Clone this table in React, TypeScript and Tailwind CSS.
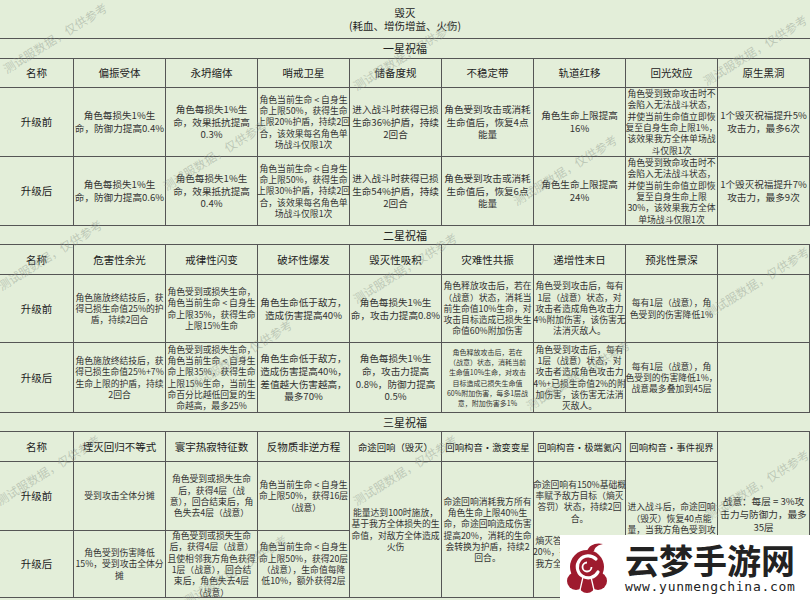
import React from 'react';

type Size = 'n' | 's' | 'xs' | 'h' | 'hs';

const sizeClass: Record<Size, string> = {
  n: 'text-[9.6px] leading-[12.7px] text-[#333]',
  s: 'text-[8.8px] leading-[11.3px] text-[#333]',
  xs: 'text-[7px] leading-[10.3px] text-[#333]',
  h: 'text-[10.5px] leading-[14px] text-[#222]',
  hs: 'text-[9.4px] leading-[14px] text-[#222]',
};

type C = { t: string; s?: Size };

const Cell: React.FC<{ text?: string; size?: Size; span?: string }> = ({ text = '', size = 'n', span = '' }) => (
  <div className={`flex items-center justify-center border-r border-b border-[#555] text-center ${span}`}>
    <p className={`whitespace-pre ${sizeClass[size]}`}>{text}</p>
  </div>
);

const SectionLabel: React.FC<{ text: string }> = ({ text }) => (
  <div className="col-span-9 flex items-center justify-center border-b border-[#555] text-[11px] text-[#222]">
    {text}
  </div>
);

const one = {
  head: ['名称', '偏振受体', '永坍缩体', '哨戒卫星', '储备度规', '不稳定带', '轨道红移', '回光效应', '原生黑洞'],
  before: [
    { t: '角色每损失1%生\n命，防御力提高0.4%' },
    { t: '角色每损失1%生\n命，效果抵抗提高\n0.3%' },
    { t: '角色当前生命 < 自身生\n命上限50%，获得生命\n上限20%护盾，持续2回\n合，该效果每名角色单\n场战斗仅限1次', s: 's' },
    { t: '进入战斗时获得已损\n生命36%护盾，持续\n2回合' },
    { t: '角色受到攻击或消耗\n生命值后，恢复4点\n能量' },
    { t: '角色生命上限提高\n16%' },
    { t: '角色受到致命攻击时不\n会陷入无法战斗状态，\n并使当前生命值立即恢\n复至自身生命上限1%，\n该效果我方全体单场战\n斗仅限1次', s: 's' },
    { t: '1个毁灭祝福提升5%\n攻击力，最多6次' },
  ] as C[],
  after: [
    { t: '角色每损失1%生\n命，防御力提高0.6%' },
    { t: '角色每损失1%生\n命，效果抵抗提高\n0.4%' },
    { t: '角色当前生命 < 自身生\n命上限50%，获得生命\n上限30%护盾，持续2回\n合，该效果每名角色单\n场战斗仅限1次', s: 's' },
    { t: '进入战斗时获得已损\n生命54%护盾，持续\n2回合' },
    { t: '角色受到攻击或消耗\n生命值后，恢复6点\n能量' },
    { t: '角色生命上限提高\n24%' },
    { t: '角色受到致命攻击时不\n会陷入无法战斗状态，\n并使当前生命值立即恢\n复至自身生命上限\n30%，该效果我方全体\n单场战斗仅限1次', s: 's' },
    { t: '1个毁灭祝福提升7%\n攻击力，最多9次' },
  ] as C[],
};

const two = {
  head: ['名称', '危害性余光', '戒律性闪变', '破坏性爆发', '毁灭性吸积', '灾难性共振', '递增性末日', '预兆性景深', ''],
  before: [
    { t: '角色施放终结技后，获\n得已损生命值25%的护\n盾，持续2回合', s: 's' },
    { t: '角色受到或损失生命，\n角色当前生命 < 自身生\n命上限35%，获得生命\n上限15%生命', s: 's' },
    { t: '角色生命低于敌方，\n造成伤害提高40%' },
    { t: '角色每损失1%生\n命，攻击力提高0.8%' },
    { t: '角色释放攻击后，若在\n（战意）状态，消耗当\n前生命值10%生命，对\n攻击目标造成已损失生\n命值60%附加伤害', s: 's' },
    { t: '角色受到攻击后，每有\n1层（战意）状态，对\n攻击者造成角色攻击力\n4%附加伤害，该伤害无\n法消灭敌人。', s: 's' },
    { t: '每有1层（战意），角\n色受到的伤害降低1%', s: 's' },
    { t: '' },
  ] as C[],
  after: [
    { t: '角色施放终结技后，获\n得已损生命值25%+7%\n生命上限的护盾，持续\n2回合', s: 's' },
    { t: '角色受到或损失生命，\n角色当前生命 < 自身生\n命上限35%，获得生命\n上限15%生命，当前生\n命百分比越低回复的生\n命越高，最多25%', s: 's' },
    { t: '角色生命低于敌方，\n造成伤害提高40%，\n差值越大伤害越高，\n最多70%' },
    { t: '角色每损失1%生\n命，攻击力提高\n0.8%，防御力提高\n0.5%' },
    { t: '角色释放攻击后，若在\n（战意）状态，消耗当前\n生命值10%生命，对攻击\n目标造成已损失生命值\n60%附加伤害，每多1层战\n意，附加伤害多1%', s: 'xs' },
    { t: '角色受到攻击后，每有\n1层（战意）状态，对\n攻击者造成角色攻击力\n4%+已损生命值2%的附\n加伤害，该伤害无法消\n灭敌人。', s: 's' },
    { t: '每有1层（战意），角\n色受到的伤害降低1%，\n战意最多叠加到45层', s: 's' },
    { t: '' },
  ] as C[],
};

const marks = [
  'left-[-7px] top-[30px]',
  'left-[343px] top-[47px]',
  'left-[693px] top-[42px]',
  'left-[153px] top-[147px]',
  'left-[503px] top-[162px]',
  'left-[-12px] top-[247px]',
  'left-[343px] top-[260px]',
  'left-[695px] top-[274px]',
  'left-[178px] top-[347px]',
  'left-[516px] top-[367px]',
  'left-[-14px] top-[462px]',
  'left-[343px] top-[462px]',
  'left-[695px] top-[477px]',
  'left-[173px] top-[562px]',
];

const Logo: React.FC = () => (
  <div className="absolute left-[560px] top-[535px] z-20 flex h-[65px] w-[250px] items-center gap-[16px] bg-white pl-[5px]">
    <svg width="44" height="52" viewBox="0 0 44 52">
      <g fill="#9e1b2e">
        <path d="M22 9 C24 3 31 0 38 2 C33 3 30 5 29 9 Z" />
        <circle cx="22" cy="25" r="17" />
        <circle cx="11" cy="39" r="9" />
        <circle cx="33" cy="39" r="9" />
        <circle cx="22" cy="43" r="8" />
      </g>
      <path d="M31 17 A11 11 0 1 0 33 30" fill="none" stroke="#fff" strokeWidth="3.2" strokeLinecap="round" />
      <path d="M22 20.5 A4.5 4.5 0 1 0 26.5 25" fill="none" stroke="#fff" strokeWidth="1.8" />
      <path d="M18 35 L15 48 M26 35 L29 48" stroke="#fff" strokeWidth="1.3" />
    </svg>
    <div className="flex flex-col">
      <span className="text-[34px] font-bold leading-[36px] text-[#222]">云梦手游网</span>
      <span className="mt-[2px] font-['DejaVu_Sans_Mono',monospace] text-[13px] leading-[14px] tracking-[0.7px] text-[#222]">
        www.yunmengchina.com
      </span>
    </div>
  </div>
);

export default function App() {
  return (
    <div className="relative h-[600px] w-[810px] overflow-hidden bg-[#e3eed9] font-['Noto_Sans_CJK_SC',sans-serif]">
      <div className="grid grid-cols-[74px_repeat(8,92px)] grid-rows-[39px_20px_29px_69px_69px_19px_30px_68px_70px_19px_30px_69px_67px]">
        <div className="col-span-9 flex flex-col items-center justify-center border-b border-[#555] text-[10.5px] leading-[13px] text-[#222]">
          <span>毁灭</span>
          <span>(耗血、增伤增益、火伤)</span>
        </div>

        <SectionLabel text="一星祝福" />
        {one.head.map((h, i) => (
          <Cell key={`h1${i}`} text={h} size="h" />
        ))}
        <Cell text="升级前" size="h" />
        {one.before.map((c, i) => (
          <Cell key={`b1${i}`} text={c.t} size={c.s} />
        ))}
        <Cell text="升级后" size="h" />
        {one.after.map((c, i) => (
          <Cell key={`a1${i}`} text={c.t} size={c.s} />
        ))}

        <SectionLabel text="二星祝福" />
        {two.head.map((h, i) => (
          <Cell key={`h2${i}`} text={h} size="h" />
        ))}
        <Cell text="升级前" size="h" />
        {two.before.map((c, i) => (
          <Cell key={`b2${i}`} text={c.t} size={c.s} />
        ))}
        <Cell text="升级后" size="h" />
        {two.after.map((c, i) => (
          <Cell key={`a2${i}`} text={c.t} size={c.s} />
        ))}

        <SectionLabel text="三星祝福" />
        <Cell text="名称" size="h" />
        <Cell text="堙灭回归不等式" size="h" />
        <Cell text="寰宇热寂特征数" size="h" />
        <Cell text="反物质非逆方程" size="h" />
        <Cell text="命途回响（毁灭）" size="hs" />
        <Cell text="回响构音·激变变星" size="hs" />
        <Cell text="回响构音·极端氦闪" size="hs" />
        <Cell text="回响构音·事件视界" size="hs" />
        <Cell text={'战意：每层 = 3%攻\n击力与防御力，最多\n35层'} span="row-span-3" />

        <Cell text="升级前" size="h" />
        <Cell text="受到攻击全体分摊" size="s" />
        <Cell text={'角色受到或损失生命\n后，获得4层（战\n意），回合结束后，角\n色失去4层（战意）'} size="s" />
        <Cell text={'角色当前生命 < 自身生\n命上限50%，获得16层\n（战意）'} size="s" />
        <Cell text={'能量达到100时施放，\n基于我方全体损失的生\n命值，对敌方全体造成\n火伤'} size="s" span="row-span-2" />
        <Cell
          text={'命途回响消耗我方所有\n角色生命上限40%生\n命，命途回响造成伤害\n提高20%，消耗的生命\n会转换为护盾，持续2\n回合。'}
          size="s"
          span="row-span-2"
        />
        <Cell
          text={'命途回响有150%基础概\n率赋予敌方目标（熵灭\n答罚）状态，持续2回\n合。\n\n熵灭答罚：受到的伤害\n20%，持续2回合，每当\n我方全体攻击后，额外\n12%火伤'}
          size="s"
          span="row-span-2"
        />
        <Cell
          text={'进入战斗后，命途回响\n（毁灭）恢复40点能\n量，当我方角色受到攻\n击时，额外恢复2点能\n量'}
          size="s"
          span="row-span-2"
        />

        <Cell text="升级后" size="h" />
        <Cell text={'角色受到伤害降低\n15%，受到攻击全体分\n摊'} size="s" />
        <Cell
          text={'角色受到或损失生命\n后，获得4层（战意）\n且使相邻我方角色获得\n1层（战意），回合结\n束后，角色失去4层\n（战意）'}
          size="s"
        />
        <Cell text={'角色当前生命 < 自身生\n命上限50%，获得20层\n（战意），生命值每降\n低10%，额外获得2层'} size="s" />
      </div>

      {marks.map((m, i) => (
        <div
          key={i}
          className={`pointer-events-none absolute z-10 w-[124px] rotate-[-32deg] whitespace-nowrap text-center text-[12px] leading-[16px] text-[#8f998d]/45 ${m}`}
        >
          测试服数据，仅供参考
        </div>
      ))}

      <Logo />
    </div>
  );
}
